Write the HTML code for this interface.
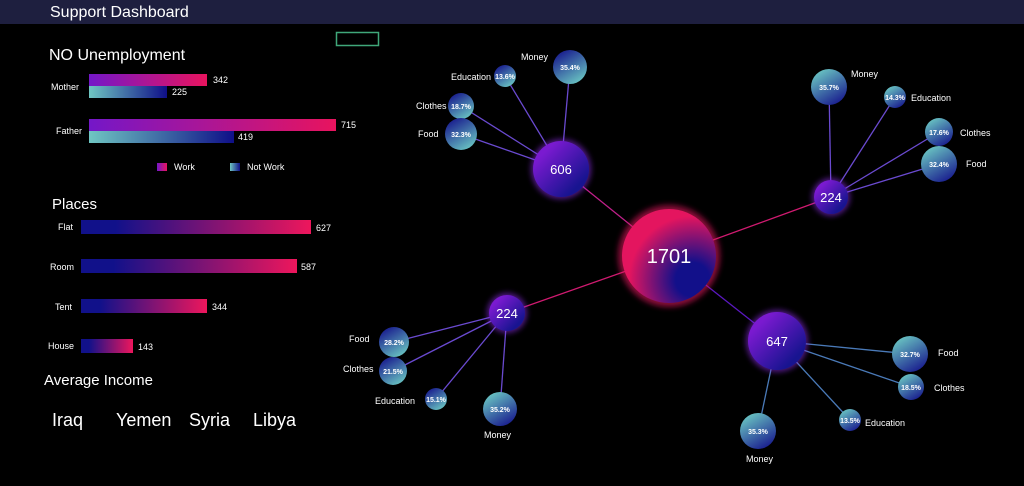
<!DOCTYPE html>
<html><head><meta charset="utf-8"><style>
body{margin:0;background:#000;width:1024px;height:481px;overflow:hidden;font-family:"Liberation Sans",sans-serif}
</style></head><body>
<svg width="1024" height="481" xmlns="http://www.w3.org/2000/svg" font-family="Liberation Sans, sans-serif">
<defs>
<linearGradient id="work" x1="0" x2="1"><stop offset="0" stop-color="#7417c8"/><stop offset="1" stop-color="#e8145e"/></linearGradient>
<linearGradient id="nw" x1="0" x2="1"><stop offset="0" stop-color="#6fc6c2"/><stop offset="1" stop-color="#0f0f88"/></linearGradient>
<linearGradient id="pl" x1="0" x2="1"><stop offset="0" stop-color="#11118a"/><stop offset="0.15" stop-color="#11118a"/><stop offset="1" stop-color="#ee165c"/></linearGradient>
<linearGradient id="cA" x1="0.2" y1="0" x2="0.8" y2="1"><stop offset="0" stop-color="#16168c"/><stop offset="1" stop-color="#6ccac4"/></linearGradient>
<linearGradient id="cB" x1="0.2" y1="0" x2="0.8" y2="1"><stop offset="0" stop-color="#6ccac4"/><stop offset="1" stop-color="#16168c"/></linearGradient>
<linearGradient id="par" x1="0" y1="0" x2="1" y2="1"><stop offset="0.2" stop-color="#7a1ad0"/><stop offset="0.8" stop-color="#181490"/></linearGradient>
<radialGradient id="big" cx="0.75" cy="0.75" r="0.9"><stop offset="0.2" stop-color="#12108a"/><stop offset="0.75" stop-color="#e4155f"/></radialGradient>
<filter id="glow" x="-50%" y="-50%" width="200%" height="200%"><feGaussianBlur stdDeviation="3"/></filter>
</defs>
<rect x="0" y="0" width="1024" height="24" fill="#1e1f3f"/>
<text x="50" y="17" fill="#fff" font-size="16">Support Dashboard</text>
<rect x="336.5" y="32.5" width="42" height="13" fill="none" stroke="#3fa77a" stroke-width="1.5"/>
<text x="49" y="60" fill="#fff" font-size="16">NO Unemployment</text>
<g font-size="9" fill="#fff">
<text x="51" y="90">Mother</text><text x="56" y="134">Father</text>
<rect x="89" y="74" width="118" height="12" fill="url(#work)"/><text x="213" y="83">342</text>
<rect x="89" y="86" width="78" height="12" fill="url(#nw)"/><text x="172" y="95">225</text>
<rect x="89" y="119" width="247" height="12" fill="url(#work)"/><text x="341" y="128">715</text>
<rect x="89" y="131" width="145" height="12" fill="url(#nw)"/><text x="238" y="140">419</text>
<rect x="157" y="163" width="10" height="8" fill="url(#work)"/><text x="174" y="170">Work</text>
<rect x="230" y="163" width="10" height="8" fill="url(#nw)"/><text x="247" y="170">Not Work</text>
</g>
<text x="52" y="209" fill="#fff" font-size="15">Places</text>
<g font-size="9" fill="#fff">
<text x="58" y="230">Flat</text><rect x="81" y="220" width="230" height="14" fill="url(#pl)"/><text x="316" y="231">627</text>
<text x="50" y="270">Room</text><rect x="81" y="259" width="216" height="14" fill="url(#pl)"/><text x="301" y="270">587</text>
<text x="55" y="310">Tent</text><rect x="81" y="299" width="126" height="14" fill="url(#pl)"/><text x="212" y="310">344</text>
<text x="48" y="349">House</text><rect x="81" y="339" width="52" height="14" fill="url(#pl)"/><text x="138" y="350">143</text>
</g>
<text x="44" y="385" fill="#fff" font-size="15">Average Income</text>
<g font-size="18" fill="#fff"><text x="52" y="426">Iraq</text><text x="116" y="426">Yemen</text><text x="189" y="426">Syria</text><text x="253" y="426">Libya</text></g>

<g stroke-width="1.3">
<line x1="669" y1="256" x2="561" y2="169" stroke="#c0208a"/>
<line x1="669" y1="256" x2="831" y2="197" stroke="#d01a70"/>
<line x1="669" y1="256" x2="507" y2="313" stroke="#d01a70"/>
<line x1="669" y1="256" x2="777" y2="341" stroke="#5a18c0"/>
<g stroke="#6a4ad0">
<line x1="561" y1="169" x2="570" y2="67"/><line x1="561" y1="169" x2="505" y2="76"/><line x1="561" y1="169" x2="461" y2="106"/><line x1="561" y1="169" x2="461" y2="134"/>
<line x1="831" y1="197" x2="829" y2="87"/><line x1="831" y1="197" x2="895" y2="97"/><line x1="831" y1="197" x2="939" y2="132"/><line x1="831" y1="197" x2="939" y2="164"/>
<line x1="507" y1="313" x2="394" y2="342"/><line x1="507" y1="313" x2="393" y2="371"/><line x1="507" y1="313" x2="436" y2="399"/><line x1="507" y1="313" x2="500" y2="409"/>
</g>
<g stroke="#4a7ab8">
<line x1="777" y1="341" x2="910" y2="354"/><line x1="777" y1="341" x2="911" y2="387"/><line x1="777" y1="341" x2="850" y2="420"/><line x1="777" y1="341" x2="758" y2="431"/>
</g>
</g>
<circle cx="669" cy="256" r="51" fill="#e4155f" opacity="0.6" filter="url(#glow)"/>
<circle cx="669" cy="256" r="47" fill="url(#big)"/>
<text x="669" y="263" fill="#fff" font-size="20" text-anchor="middle">1701</text>
<g fill="#8a2be2" opacity="0.6" filter="url(#glow)"><circle cx="561" cy="169" r="30"/><circle cx="831" cy="197" r="19"/><circle cx="507" cy="313" r="20"/><circle cx="777" cy="341" r="31"/></g>
<g fill="url(#par)"><circle cx="561" cy="169" r="28"/><circle cx="831" cy="197" r="17"/><circle cx="507" cy="313" r="18"/><circle cx="777" cy="341" r="29"/></g>
<g fill="#fff" text-anchor="middle" font-size="13"><text x="561" y="174">606</text><text x="831" y="202">224</text><text x="507" y="318">224</text><text x="777" y="346">647</text></g>

<g fill="url(#cA)"><circle cx="570" cy="67" r="17"/><circle cx="505" cy="76" r="11"/><circle cx="461" cy="106" r="13"/><circle cx="461" cy="134" r="16"/>
<circle cx="394" cy="342" r="15"/><circle cx="393" cy="371" r="14"/><circle cx="436" cy="399" r="11"/></g>
<g fill="url(#cB)"><circle cx="829" cy="87" r="18"/><circle cx="895" cy="97" r="11"/><circle cx="939" cy="132" r="14"/><circle cx="939" cy="164" r="18"/><circle cx="500" cy="409" r="17"/>
<circle cx="910" cy="354" r="18"/><circle cx="911" cy="387" r="13"/><circle cx="850" cy="420" r="11"/><circle cx="758" cy="431" r="18"/></g>
<g fill="#fff" font-size="7" font-weight="bold" text-anchor="middle">
<text x="570" y="70">35.4%</text><text x="505" y="79">13.6%</text><text x="461" y="109">18.7%</text><text x="461" y="137">32.3%</text>
<text x="829" y="90">35.7%</text><text x="895" y="100">14.3%</text><text x="939" y="135">17.6%</text><text x="939" y="167">32.4%</text>
<text x="394" y="345">28.2%</text><text x="393" y="374">21.5%</text><text x="436" y="402">15.1%</text><text x="500" y="412">35.2%</text>
<text x="910" y="357">32.7%</text><text x="911" y="390">18.5%</text><text x="850" y="423">13.5%</text><text x="758" y="434">35.3%</text>
</g>
<g fill="#fff" font-size="9">
<text x="521" y="60">Money</text><text x="451" y="80">Education</text><text x="416" y="109">Clothes</text><text x="418" y="137">Food</text>
<text x="851" y="77">Money</text><text x="911" y="101">Education</text><text x="960" y="136">Clothes</text><text x="966" y="167">Food</text>
<text x="349" y="342">Food</text><text x="343" y="372">Clothes</text><text x="375" y="404">Education</text><text x="484" y="438">Money</text>
<text x="938" y="356">Food</text><text x="934" y="391">Clothes</text><text x="865" y="426">Education</text><text x="746" y="462">Money</text>
</g>
</svg>
</body></html>
